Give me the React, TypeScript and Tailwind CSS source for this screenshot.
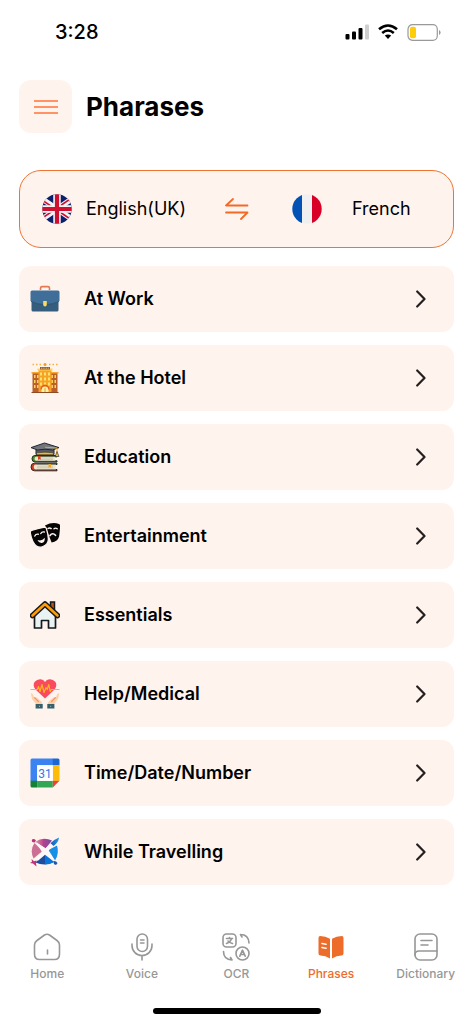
import { FC, ReactNode } from "react";
import clsx from "clsx";

const UkFlag: FC = () => (
  <svg viewBox="0 0 30 30" className="size-[30px] shrink-0" aria-hidden="true">
    <defs>
      <clipPath id="uk">
        <circle cx="15" cy="15" r="14.7" />
      </clipPath>
    </defs>
    <g clipPath="url(#uk)">
      <rect width="30" height="30" fill="#0b1f6b" />
      <path d="M-4 2 34 28M34 2-4 28" stroke="#f4f2f2" strokeWidth="5.5" />
      <path d="M-4 3.2 15 16.2M34 1 15 14M15 16 34 29M15 14-4 27" stroke="#cf1234" strokeWidth="1.6" />
      <path d="M15 0v30M0 15h30" stroke="#f4f2f2" strokeWidth="7.5" />
      <path d="M15 0v30M0 15h30" stroke="#cf0f30" strokeWidth="4.2" />
    </g>
  </svg>
);

const FrenchFlag: FC = () => (
  <svg viewBox="0 0 30 30" className="size-[30px] shrink-0" aria-hidden="true">
    <defs>
      <clipPath id="fr">
        <circle cx="15" cy="15" r="14.7" />
      </clipPath>
    </defs>
    <g clipPath="url(#fr)">
      <rect width="30" height="30" fill="#f0f0f0" />
      <rect width="10" height="30" fill="#0052b4" />
      <rect x="20" width="10" height="30" fill="#d80027" />
    </g>
  </svg>
);

const Work: FC = () => (
  <>
    <path d="M10.5 6V4.2Q10.5 2.6 12.2 2.6h5.6q1.7 0 1.7 1.6V6" fill="none" stroke="#e57a50" strokeWidth="1.6" />
    <path d="M1.5 10h27v16q0 1.5-1.5 1.5H3q-1.5 0-1.5-1.5z" fill="#355d7e" />
    <path d="M2 6.5h26q1.5 0 1.5 1.5v9q-6 3.2-14.5 3.2T.5 17V8Q.5 6.5 2 6.5z" fill="#3f6f98" />
    <path d="M1 17.4q6 3.2 14 3.2t14-3.2" fill="none" stroke="#2e5270" strokeWidth=".8" />
    <path d="M13.2 17h3.6v4.2L15 22.8 13.2 21.2z" fill="#f7dc64" />
  </>
);

const Hotel: FC = () => (
  <>
    <path d="M2.5 10h7v19.5h-7zM20.5 10h7v19.5h-7z" fill="#b95f29" />
    <path d="M1.5 9h8v1.5h-8zM20.5 9h8v1.5h-8z" fill="#f4a92f" />
    <path d="M8.5 7h13v22.5h-13z" fill="#f6a226" />
    <path d="M7.5 5.5h15v2h-15z" fill="#ffd35a" />
    <path d="M10 4h10v2.5H10z" fill="#9b5a27" />
    <path d="M11 5.2h8" stroke="#ffe39a" strokeWidth=".8" strokeDasharray="1 .7" />
    <path
      d="M4 12h1.5v3H4zM7 12h1.5v3H7zM4 17h1.5v3H4zM7 17h1.5v3H7zM4 22h1.5v3H4zM7 22h1.5v3H7zM21.5 12H23v3h-1.5zM24.5 12H26v3h-1.5zM21.5 17H23v3h-1.5zM24.5 17H26v3h-1.5zM21.5 22H23v3h-1.5zM24.5 22H26v3h-1.5z"
      fill="#ffd15c"
    />
    <path
      d="M10 9.5h2v3h-2zM14 9.5h2v3h-2zM18 9.5h2v3h-2zM10 14.5h2v3h-2zM14 14.5h2v3h-2zM18 14.5h2v3h-2zM10 19.5h2v3h-2zM14 19.5h2v2h-2zM18 19.5h2v3h-2z"
      fill="#ffe16d"
    />
    <path d="M11.5 29.5V27a3.5 3.5 0 0 1 7 0v2.5z" fill="#fff0a0" />
    <path d="M11 26.5a4 4 0 0 1 8 0" fill="none" stroke="#e4572e" strokeWidth="1.3" />
    <path d="M15 25v4.5" stroke="#c98427" strokeWidth=".7" />
    <path d="M1.5 29.5h27" stroke="#8c4a25" />
    <circle cx="15" cy="1.5" r="1.5" fill="#f59a23" />
    <path d="M2.5 1.5h1.5M6 1.5h1.5M9.5 1.5H11M19 1.5h1.5M22.5 1.5H24M26 1.5h1.5" stroke="#f8b13c" strokeWidth="1.5" />
  </>
);

const Education: FC = () => (
  <>
    <path d="M27 13.5H5q-3 0-3 3.2T5 20h22v-1.200H8v-4h19z" fill="#4f8a2c" stroke="#222b25" />
    <path d="M25.5 14.8H6.5q-2 0-2 2t2 1.900h19q-1.300-1.900 0-3.900z" fill="#eee6cd" />
    <path d="M27 21.2H4.5Q1 21.2 1 25t3.5 3.800H27v-1.300H6.5v-5H27z" fill="#cf3f26" stroke="#222b25" />
    <path d="M26 22.6H6q-2.300 0-2.300 2.400T6 27.4h20q-1.500-2.400 0-4.800z" fill="#eee6cd" />
    <path d="M7 24.2h16M7 25.8h16M8 16h15M8 17.4h15" stroke="#afaa98" strokeWidth=".5" />
    <path d="M6 7v5.5h18V7" fill="#545963" stroke="#222831" />
    <path d="M6.5 10.8Q15 9.6 23.5 10.8v2h-17z" fill="#f4b72f" stroke="#222831" strokeWidth=".5" />
    <path d="M1 5.6 14.5 1 29 5.6 22.5 8Q15 6.4 7.5 8z" fill="#70757e" stroke="#222831" />
    <path d="M15 5.2 27 6v5" fill="none" stroke="#e9a92b" />
    <path d="M27 9.5 25.2 14.5h3.8z" fill="#f8ba2e" stroke="#222831" strokeWidth=".6" />
    <path d="M8 14h2.6v4L9.3 17 8 18z" fill="#d44229" />
    <path d="M18.5 22H21v4l-1.200-1-1.300 1z" fill="#edaa29" />
  </>
);

const Masks: FC = () => (
  <>
    <path
      d="M15 4.5Q22.500.5 29 3q1.400.6 1.100 2.500-.4 6-1 10-1.300 5-7.500 6z"
      fill="#050505"
    />
    <path
      d="M1.5 9.5Q7.5 7.5 14.5 6q1.300 0 1.800 1.400 1.800 5.500 2.100 10.500 0 5.500-5.500 7.600-3.500 1.500-6.400-.5Q2 21.500.3 12q-.2-2 1.200-2.500z"
      fill="#050505"
      stroke="#fff3ee"
      strokeWidth="1.300"
    />
    <path
      d="M4.800 15q1-2.200 3.500-1.800M10.800 12.500q1-2 3.500-1.500M18 7.500q1.500-1.200 3.200.1M24 7.800q1.500-1.300 3.200 0"
      fill="none"
      stroke="#fff3ee"
      strokeWidth="1.400"
      strokeLinecap="round"
    />
    <path d="M7.500 19q4.200 1.500 7.300-2.200.2 4.700-3 5.200-3 .3-4.300-3z" fill="#fff3ee" />
    <path d="M20 14.500q2.600-3.400 5.500-.2" fill="none" stroke="#fff3ee" strokeWidth="1.700" strokeLinecap="round" />
  </>
);

const House: FC = () => (
  <>
    <path d="M20.500 2h4v9l-4-4z" fill="#b65320" stroke="#16191c" strokeWidth="1.500" />
    <path d="M4.500 14 15 4.500 25.500 14v14H18.500v-7.500h-7V28h-7z" fill="#eaf3f4" stroke="#16191c" strokeWidth="1.700" strokeLinejoin="round" />
    <path d="M2.500 15.500 15 4l12.500 11.500" fill="none" stroke="#16191c" strokeWidth="5.600" strokeLinecap="round" strokeLinejoin="round" />
    <path d="M2.500 15.500 15 4l12.500 11.500" fill="none" stroke="#ff9c08" strokeWidth="2.600" strokeLinecap="round" strokeLinejoin="round" />
  </>
);

const Medical: FC = () => (
  <>
    <path d="M15 19.500 5.500 10.500Q2.300 6.500 4.700 2.800 7 0 10.500.2 13.500.500 15 3q1.500-2.500 4.500-2.800 3.500-.2 5.800 2.600 2.400 3.700-.8 7.700z" fill="#fa4a5d" />
    <path d="M.5 10.500h6.700l1.300-3 1.500 5 2-7 2 8 2-5 1.200 2 1.600-5 1.400 7 1.200-2h8.100" fill="none" stroke="#ffb51c" strokeWidth="1.200" strokeLinejoin="round" />
    <path d="M.8 14.300q1.700-.5 2.500 2l1 2.600 1.500-1 4.600 3.700q2 1.800 2 3.900H6.300L2 20z" fill="#ffd0a8" />
    <path d="M29.200 14.300q-1.700-.5-2.500 2l-1 2.600-1.500-1-4.600 3.700q-2 1.800-2 3.900h6.100L28 20z" fill="#ffd0a8" />
    <path d="m4.500 18.700 4 4M25.500 18.700l-4 4" stroke="#e8976b" strokeWidth="1.200" strokeLinecap="round" />
    <path d="M5.600 25h7.100v4.600H5.600zM17.300 25h7.100v4.600h-7.100z" fill="#36606a" />
    <path d="M9 27.300h1M20.200 27.300h1" stroke="#9fc2c8" />
  </>
);

const Calendar: FC = () => (
  <>
    <path d="M2 .5h21v6.700H7.200V23H.5V2Q.5.500 2 .5z" fill="#3b83f1" />
    <path d="M22.800.500H28q1.500 0 1.500 1.500v5.200h-6.700z" fill="#1b66d1" />
    <path d="M22.800 7.200h6.700v15.600h-6.700z" fill="#fcbc09" />
    <path d="M7.200 22.800h15.600v6.700H7.200z" fill="#32a753" />
    <path d="M.5 22.800h6.700v6.700H2Q.5 29.500.5 28z" fill="#148038" />
    <path d="M22.800 22.800h6.700l-6.700 6.700z" fill="#e94435" />
    <path d="M7.200 7.200h15.600v15.600H7.200z" fill="#fff" />
    <text x="15" y="19.500" textAnchor="middle" fontSize="12" fontFamily="Roboto, sans-serif" fill="#2f78e8">
      31
    </text>
  </>
);

const Travel: FC = () => (
  <>
    <defs>
      <linearGradient id="trip" x1="0" y1="0" x2="1" y2="0">
        <stop offset="0" stopColor="#d8a0a4" />
        <stop offset=".5" stopColor="#b9408f" />
        <stop offset="1" stopColor="#6a4fae" />
      </linearGradient>
      <linearGradient id="sea" x1="0" y1="1" x2="1" y2="0">
        <stop offset="0" stopColor="#1b3a8a" />
        <stop offset="1" stopColor="#2196f0" />
      </linearGradient>
    </defs>
    <path d="M5 5Q13-.8 22 3.500L15.500 11.500z" fill="url(#trip)" />
    <path d="M4.500 6Q-.5 13 3.500 21.500L12.500 14z" fill="#cd6f94" />
    <path d="M27 8.500q2.500 8-2 15l-6.500-10.500z" fill="#168fe8" />
    <path d="m15 16.500 9 8.500Q15 29.500 5.500 25.500z" fill="#1e4d9f" />
    <path d="m15 16.500 9 8.500q-4 2.500-9 2.500z" fill="#0877dc" />
    <path d="M2 2.500q2-1.200 4 1l-1.500 2Q1 5.500 2 2.500zM1.500 22l2.500 2.200 2.500-.7-.5 3 .5 3-3.500-3-3-.5 2-1.200z" fill="#bf337c" />
    <path d="M20.500 6.200Q24 2.500 29 .500q-.5 5-5.500 8.500zM24 24q2.500 0 3.500 2-.5 2.500-3 1.500-1.500-1-.5-3.500z" fill="url(#sea)" />
    <path d="m6 5 9.500 6.200 5.300-4.300 1.800 1.800-4.300 5.300 6.200 9-1.300 1-8.200-6.200-7 6-2-2 6-6.800z" fill="#fff8f6" />
  </>
);

const phrases: { label: string; icon: ReactNode }[] = [
  { label: "At Work", icon: <Work /> },
  { label: "At the Hotel", icon: <Hotel /> },
  { label: "Education", icon: <Education /> },
  { label: "Entertainment", icon: <Masks /> },
  { label: "Essentials", icon: <House /> },
  { label: "Help/Medical", icon: <Medical /> },
  { label: "Time/Date/Number", icon: <Calendar /> },
  { label: "While Travelling", icon: <Travel /> },
];

const tabs: { label: string; icon: ReactNode; active?: boolean }[] = [
  {
    label: "Home",
    icon: (
      <>
        <path d="M4 7.500 11.500 2q2.500-1.600 5 0L24 7.500q2.500 1.800 2.500 4.500v9q0 5.500-5 5.500h-15q-5 0-5-5.500v-9q0-2.700 2.500-4.500z" />
        <path d="M14.500 17v4" />
      </>
    ),
  },
  {
    label: "Voice",
    icon: (
      <>
        <rect x="9" y="1" width="10.500" height="17.500" rx="5.200" />
        <path d="M4 11v1.500a10 10 0 0 0 20 0V11M14 22.500V27M12.500 7h3.500M12.500 10h3.500" />
      </>
    ),
  },
  {
    label: "OCR",
    icon: (
      <>
        <rect x="1" y="1" width="13" height="13" rx="3.500" />
        <circle cx="20.500" cy="20.500" r="6.500" />
        <path d="M4.500 5.500h6M7.500 4.500v1M9.500 5.500q-.8 3.500-5 5M6 8q2 2 4.500 2.500M17.800 23.200l2.700-6 2.700 6M18.800 21.500h3.400" />
        <path d="M18.500 1.500q8 0 8.500 8.500M18.500 1.500l1.500 2.500M1.500 18.500q0 8 8.500 8.500M10 27l-1.500-2.500" />
      </>
    ),
  },
  {
    label: "Phrases",
    active: true,
    icon: (
      <>
        <path
          d="M3.200 3Q8.500 3 13 5.800V25.500Q8.500 22.800 3.500 22.600 1.500 22.500 1.500 20.500V5Q1.500 3 3.200 3zM24.800 3Q19.500 3 15 5.800V25.500q4.500-2.700 9.500-2.900 2-.1 2-2.100V5q0-2-1.700-2z"
          fill="#ee6c2a"
          stroke="none"
        />
        <path d="M5 10.500l4 .8M5 14.500l4 .8" stroke="#fff" />
      </>
    ),
  },
  {
    label: "Dictionary",
    icon: (
      <>
        <rect x="3" y="1" width="22" height="26" rx="5" />
        <path d="M3 22q0-4 4-4h18M9 7.500h11M9 12h7" />
      </>
    ),
  },
];

const StatusBar: FC = () => (
  <div className="flex h-16 items-center justify-between pl-[55px] pr-8">
    <span className="text-xl font-medium">3:28</span>
    <div className="flex items-center gap-[9px]">
      <svg viewBox="0 0 24 16" className="h-4 w-6" aria-hidden="true">
        <rect x=".5" y="10" width="4" height="5.500" rx="1" />
        <rect x="7" y="7.500" width="4" height="8" rx="1" />
        <rect x="13.500" y="4" width="4" height="11.500" rx="1" />
        <rect x="20" y=".5" width="4" height="15" rx="1" fill="#cfcfcf" />
      </svg>
      <svg viewBox="0 0 20 16" className="h-4 w-5" fill="none" stroke="#000" strokeWidth="2.500" aria-hidden="true">
        <path d="M1 5.300q9-7.700 18 0M4.200 9q5.800-5 11.600 0" />
        <path d="M6.800 11.600q3.200-2.400 6.400 0L10 15z" fill="#000" stroke="none" />
      </svg>
      <svg viewBox="0 0 34 17" className="h-[17px] w-[34px]" aria-hidden="true">
        <rect x="1" y=".7" width="29.300" height="15.600" rx="4.500" fill="#fff" stroke="#999" strokeWidth="1.200" />
        <rect x="3" y="2.700" width="6" height="11.600" rx="2" fill="#ffcc0a" />
        <path d="M32 6q1.600.6 1.600 2.500T32 11z" fill="#999" />
      </svg>
    </div>
  </div>
);

const App: FC = () => {
  return (
    <div className="flex min-h-screen flex-col bg-white font-[Inter,sans-serif] text-black">
      <StatusBar />

      <main className="px-[19px] pt-4">
        <header className="flex items-center gap-[14px]">
          <button aria-label="Menu" className="flex size-[53px] items-center justify-center rounded-xl bg-[#fff3ee]">
            <svg viewBox="0 0 24 16" className="h-4 w-6" stroke="#ff9364" strokeWidth="1.800" aria-hidden="true">
              <path d="M0 2h24M0 8h24M0 14h24" />
            </svg>
          </button>
          <h1 className="text-[26px] font-bold">Pharases</h1>
        </header>

        <section className="mt-[37px] grid h-[78px] grid-cols-[1fr_24px_1fr] items-center rounded-[22px] border border-[#ee7435] bg-[#fff3ee] text-lg">
          <button className="flex items-center gap-[14px] pl-[22px]">
            <UkFlag />
            <span>English(UK)</span>
          </button>
          <button aria-label="Swap languages">
            <svg viewBox="0 0 24 24" className="size-6" fill="none" stroke="#f26b26" strokeWidth="1.800" strokeLinecap="round" strokeLinejoin="round" aria-hidden="true">
              <path d="M8 2 1 8.500h21.500M1 15.500h21.500L16 22" />
            </svg>
          </button>
          <button className="flex items-center pl-[43px] pr-3">
            <FrenchFlag />
            <span className="flex-1 text-center">French</span>
          </button>
        </section>

        <ul className="mt-[18px] flex flex-col gap-[13px]">
          {phrases.map((item) => (
            <li key={item.label}>
              <button className="flex h-[66px] w-full items-center gap-6 rounded-xl bg-[#fff3ee] pl-[11px] pr-7 text-left">
                <svg viewBox="0 0 30 30" className="size-[30px] shrink-0" aria-hidden="true">
                  {item.icon}
                </svg>
                <span className="flex-1 text-lg font-semibold">{item.label}</span>
                <svg viewBox="0 0 10 18" className="h-[18px] w-[10px]" fill="none" stroke="#24201f" strokeWidth="2.200" strokeLinecap="round" strokeLinejoin="round" aria-hidden="true">
                  <path d="m1.200 1.500 7.300 7.500-7.300 7.500" />
                </svg>
              </button>
            </li>
          ))}
        </ul>
      </main>

      <nav className="mt-auto grid grid-cols-5 pt-6">
        {tabs.map((tab) => (
          <a
            key={tab.label}
            href="#"
            className={clsx(
              "flex flex-col items-center gap-[5px] text-xs font-medium",
              tab.active ? "text-[#ee6c2a]" : "text-[#979797]"
            )}
          >
            <svg viewBox="0 0 28 28" className="size-7" fill="none" stroke="currentColor" strokeWidth="1.600" strokeLinecap="round" strokeLinejoin="round" aria-hidden="true">
              {tab.icon}
            </svg>
            {tab.label}
          </a>
        ))}
      </nav>
      <div className="mx-auto mt-[26px] mb-[10px] h-[6px] w-[168px] rounded-full bg-black" />
    </div>
  );
};

export default App;
